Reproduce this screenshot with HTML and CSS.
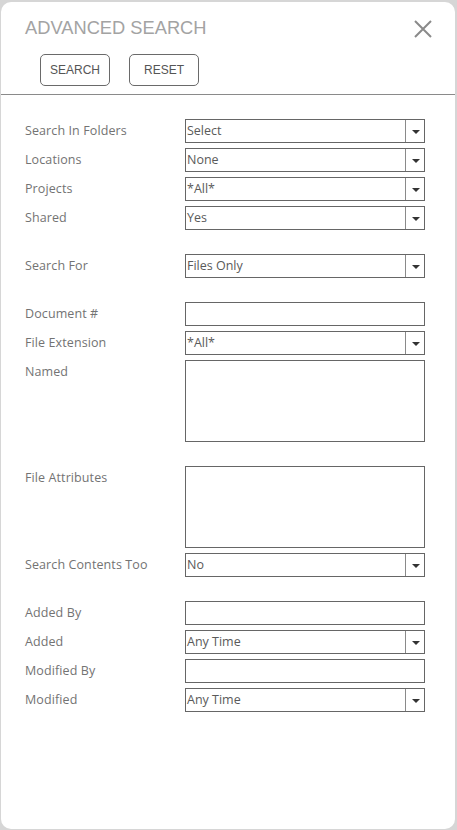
FILE: index.html
```html
<!DOCTYPE html>
<html lang="en">
<head>
<meta charset="utf-8">
<title>Advanced Search</title>
<link rel="stylesheet" href="styles.css">
</head>
<body>
<div class="modal">
  <div class="head">
    <h1 class="title">ADVANCED SEARCH</h1>
    <button class="close" aria-label="Close">
      <svg width="18" height="18" viewBox="0 0 18 18"><path d="M1 1 L17 17 M17 1 L1 17" stroke="#8a8a8a" stroke-width="2" fill="none"/></svg>
    </button>
  </div>
  <div class="actions">
    <button class="btn">SEARCH</button>
    <button class="btn">RESET</button>
  </div>
  <div class="rule"></div>
  <div class="form">
    <div class="group">
      <label class="label">Search In Folders</label>
      <div class="select"><span class="value">Select</span><span class="arrow"></span></div>
      <label class="label">Locations</label>
      <div class="select"><span class="value">None</span><span class="arrow"></span></div>
      <label class="label">Projects</label>
      <div class="select"><span class="value">*All*</span><span class="arrow"></span></div>
      <label class="label">Shared</label>
      <div class="select"><span class="value">Yes</span><span class="arrow"></span></div>
    </div>
    <div class="group">
      <label class="label">Search For</label>
      <div class="select"><span class="value">Files Only</span><span class="arrow"></span></div>
    </div>
    <div class="group">
      <label class="label">Document #</label>
      <div class="input"></div>
      <label class="label">File Extension</label>
      <div class="select"><span class="value">*All*</span><span class="arrow"></span></div>
      <label class="label">Named</label>
      <div class="area"></div>
    </div>
    <div class="group">
      <label class="label">File Attributes</label>
      <div class="area"></div>
      <label class="label">Search Contents Too</label>
      <div class="select"><span class="value">No</span><span class="arrow"></span></div>
    </div>
    <div class="group">
      <label class="label">Added By</label>
      <div class="input"></div>
      <label class="label">Added</label>
      <div class="select"><span class="value">Any Time</span><span class="arrow"></span></div>
      <label class="label">Modified By</label>
      <div class="input"></div>
      <label class="label">Modified</label>
      <div class="select"><span class="value">Any Time</span><span class="arrow"></span></div>
    </div>
  </div>
</div>
</body>
</html>
```
FILE: styles.css
```css
* { box-sizing: border-box; }
html, body { margin: 0; padding: 0; }
body {
  width: 457px;
  height: 830px;
  background: #d6d6d6;
  font-family: "Open Sans", "Liberation Sans", sans-serif;
  padding: 2px 2px 1px 1px;
}
.modal {
  background: #fff;
  border-radius: 10px;
  height: 827px;
  display: flex;
  flex-direction: column;
}
.head {
  display: flex;
  justify-content: space-between;
  align-items: flex-start;
  padding: 15px 23px 0 24px;
}
.title {
  margin: 0;
  font-family: "Liberation Sans", Arial, sans-serif;
  font-weight: normal;
  font-size: 18.3px;
  line-height: 22px;
  color: #a3a3a3;
}
.close {
  border: 0;
  background: none;
  padding: 0;
  margin-top: 3px;
  width: 18px;
  height: 18px;
  display: block;
}
.close svg { display: block; }
.actions {
  display: flex;
  gap: 19px;
  padding: 15px 0 0 39px;
}
.btn {
  width: 70px;
  height: 32px;
  border: 1px solid #6a6a6a;
  border-radius: 5px;
  background: #fff;
  font-family: "Liberation Sans", Arial, sans-serif;
  font-size: 12px;
  color: #555;
  padding: 0;
}
.rule {
  margin-top: 8px;
  height: 1px;
  background: #8a8a8a;
}
.form {
  display: flex;
  flex-direction: column;
  gap: 24px;
  padding: 24px 0 0 24px;
}
.group {
  display: grid;
  grid-template-columns: 160px 240px;
  row-gap: 5px;
  align-items: start;
}
.label {
  font-size: 12.5px;
  line-height: 24px;
  letter-spacing: 0.1px;
  color: #737373;
}
.select, .input, .area {
  border: 1px solid #666;
  height: 24px;
  background: #fff;
}
.area { height: 82px; }
.select { display: flex; }
.value {
  flex: 1;
  padding-left: 1px;
  font-size: 12.5px;
  line-height: 22px;
  color: #5a5a5a;
}
.arrow {
  width: 19px;
  border-left: 1px solid #8a8a8a;
  position: relative;
}
.arrow::after {
  content: "";
  position: absolute;
  left: 6px;
  top: 10px;
  border-left: 4px solid transparent;
  border-right: 4px solid transparent;
  border-top: 4px solid #333;
}
```
